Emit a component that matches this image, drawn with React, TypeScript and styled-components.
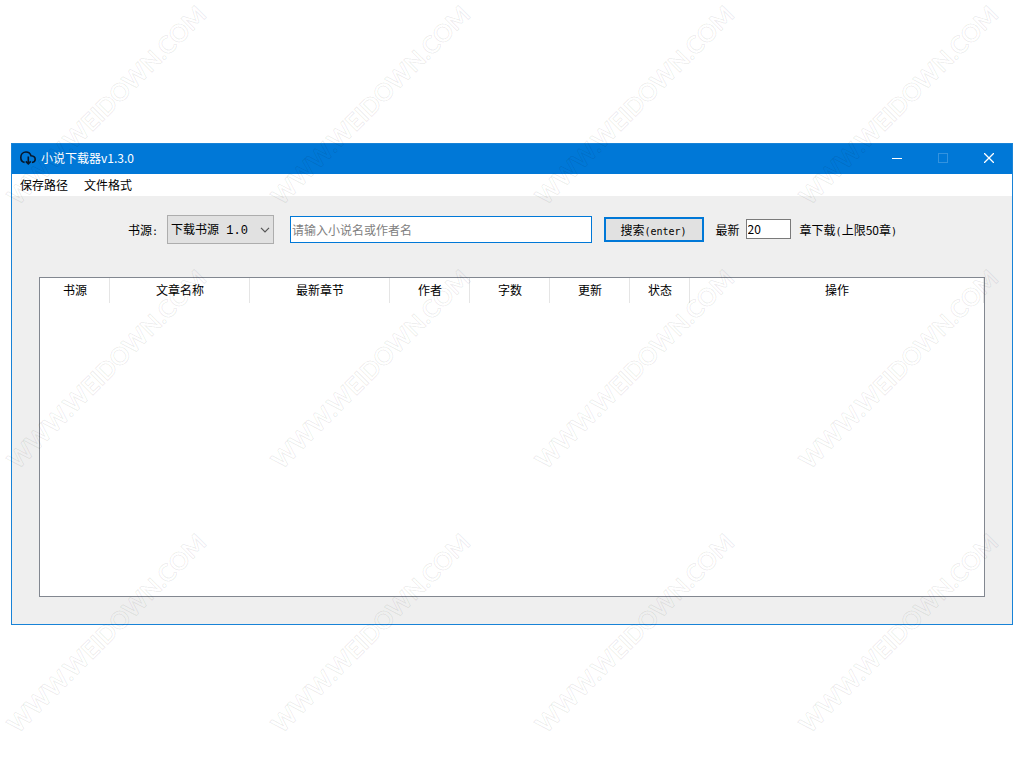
import React from "react";
import styled, { createGlobalStyle } from "styled-components";

const GlobalStyle = createGlobalStyle`
  * { box-sizing: border-box; }
  body {
    margin: 0;
    background: #fff;
    color: #000;
    font: 12px/16px "Noto Sans CJK SC", sans-serif;
  }
  button, input, select { font: inherit; color: inherit; margin: 0; border-radius: 0; outline: 0; }
`;

const Desktop = styled.main`
  position: relative;
  min-height: 100vh;
  padding: 143px 11px;
  overflow: hidden;
`;

const Window = styled.section`
  border: 1px solid #1883d7;
  background: #efefef;
`;

const TitleBar = styled.header`
  display: flex;
  align-items: center;
  height: 30px;
  padding: 0 0 2px 8px;
  background: #0078d7;
  color: #fff;
`;

const AppIcon = styled.svg`
  width: 16px;
  height: 16px;
  margin-right: 5px;
`;

const Title = styled.h1`
  flex: 1;
  margin: 0;
  font-size: 12px;
  font-weight: 400;
`;

const CaptionButton = styled.button`
  display: grid;
  place-items: center;
  width: 46px;
  height: 28px;
  padding: 0;
  border: 0;
  background: none;
  color: #fff;

  &:disabled { color: #3393df; }
`;

const MenuBar = styled.nav`
  display: flex;
  height: 22px;
  background: #fff;
`;

const MenuItem = styled.button`
  padding: 0 8px;
  border: 0;
  background: none;
`;

const Body = styled.div`
  padding: 19px 27px 27px;
`;

const SearchForm = styled.form`
  display: flex;
  align-items: center;
  height: 29px;
  margin-bottom: 33px;
  padding: 0 88px 0 89px;
`;

const Latin = styled.span`
  font: 10px/12px "DejaVu Sans Mono", monospace;
`;

const SourceLabel = styled.label`
  margin-right: 9px;
`;

const SelectWrap = styled.div`
  position: relative;
  width: 107px;
  margin-right: 16px;
`;

const SourceSelect = styled.select`
  display: block;
  width: 100%;
  height: 29px;
  padding: 2px 0 0 3px;
  appearance: none;
  border: 1px solid #adadad;
  background: #e1e1e1;
  font-family: "Liberation Mono", "Noto Sans CJK SC", monospace;
`;

const Chevron = styled.svg`
  position: absolute;
  top: 12px;
  right: 4px;
  width: 10px;
  height: 6px;
  pointer-events: none;
`;

const SearchInput = styled.input`
  flex: 1;
  min-width: 0;
  height: 27px;
  margin-right: 12px;
  padding: 0 1px;
  border: 1px solid #0078d7;
  background: #fff;

  &::placeholder { color: #808080; opacity: 1; }
`;

const SearchButton = styled.button`
  width: 100px;
  height: 25px;
  margin-right: 12px;
  padding: 0;
  border: 2px solid #0078d7;
  background: #e1e1e1;
`;

const CountInput = styled.input`
  width: 45px;
  height: 20px;
  margin: 0 9px 2px 6px;
  padding: 0 1px;
  border: 1px solid #7a7a7a;
  background: #fff;
`;

const TableFrame = styled.div`
  min-height: 320px;
  border: 1px solid #828790;
  background: #fff;
`;

const ResultTable = styled.table`
  width: 100%;
  table-layout: fixed;
  border-collapse: collapse;
`;

const HeadCell = styled.th<{ $width?: number }>`
  width: ${({ $width }) => ($width ? `${$width}px` : "auto")};
  height: 25px;
  padding: 0 0 2px;
  font-weight: 400;
  box-shadow: inset -1px 0 #e5e5e5;
`;

const WatermarkLayer = styled.div`
  position: absolute;
  inset: 0;
  overflow: hidden;
  display: grid;
  grid-template-columns: repeat(4, 264px);
  grid-auto-rows: 264px;
  pointer-events: none;
  user-select: none;
`;

const WatermarkTile = styled.div`
  display: grid;
  place-content: center;
  width: 212px;
  height: 210px;
`;

const WatermarkText = styled.span`
  transform: rotate(-45deg);
  white-space: nowrap;
  font: 700 24px/32px Lato, sans-serif;
  color: transparent;
  -webkit-text-stroke: 1px rgba(0, 0, 0, 0.08);
`;

const columns: { label: string; width?: number }[] = [
  { label: "书源", width: 70 },
  { label: "文章名称", width: 140 },
  { label: "最新章节", width: 140 },
  { label: "作者", width: 80 },
  { label: "字数", width: 80 },
  { label: "更新", width: 80 },
  { label: "状态", width: 60 },
  { label: "操作" },
];

export default function App() {
  return (
    <Desktop>
      <GlobalStyle />
      <Window>
        <TitleBar>
          <AppIcon viewBox="0 0 16 16" fill="none" stroke="#06172b" strokeWidth="1.6" aria-hidden="true">
            <path d="M4.6 12.4C2.1 11.9.8 9.9.8 7.4.8 4.3 3 2 6 2c2.5 0 4.3 1.4 5 3.7 2.5.2 4.2 1.5 4.2 3.6 0 1.8-1.2 3-3.2 3.2" />
            <path d="M8.3 6.4v7.4M5.8 11.4l2.5 2.5 2.5-2.5" />
          </AppIcon>
          <Title>小说下载器v1.3.0</Title>
          <CaptionButton aria-label="最小化">
            <svg width="10" height="10" shapeRendering="crispEdges"><path d="M0 5.5h10" stroke="currentColor" /></svg>
          </CaptionButton>
          <CaptionButton aria-label="最大化" disabled>
            <svg width="10" height="10" shapeRendering="crispEdges"><rect x=".5" y=".5" width="9" height="9" fill="none" stroke="currentColor" /></svg>
          </CaptionButton>
          <CaptionButton aria-label="关闭">
            <svg width="10" height="10"><path d="M0 0l10 10M10 0L0 10" stroke="currentColor" strokeWidth="1.3" /></svg>
          </CaptionButton>
        </TitleBar>
        <MenuBar>
          <MenuItem>保存路径</MenuItem>
          <MenuItem>文件格式</MenuItem>
        </MenuBar>
        <Body>
          <SearchForm onSubmit={(e) => e.preventDefault()}>
            <SourceLabel htmlFor="source">书源<Latin>:</Latin></SourceLabel>
            <SelectWrap>
              <SourceSelect id="source">
                <option>下载书源 1.0</option>
              </SourceSelect>
              <Chevron viewBox="0 0 10 6" fill="none" stroke="#555" strokeWidth="1.2" aria-hidden="true">
                <path d="M1 .8l4 4 4-4" />
              </Chevron>
            </SelectWrap>
            <SearchInput aria-label="小说名或作者名" placeholder="请输入小说名或作者名" />
            <SearchButton type="submit">搜索<Latin>(enter)</Latin></SearchButton>
            <label htmlFor="count">最新</label>
            <CountInput id="count" defaultValue="20" />
            <label htmlFor="count">章下载<Latin>(</Latin>上限50章<Latin>)</Latin></label>
          </SearchForm>
          <TableFrame>
            <ResultTable>
              <thead>
                <tr>
                  {columns.map((c) => (
                    <HeadCell key={c.label} $width={c.width} scope="col">{c.label}</HeadCell>
                  ))}
                </tr>
              </thead>
            </ResultTable>
          </TableFrame>
        </Body>
      </Window>
      <WatermarkLayer aria-hidden="true">
        {Array.from({ length: 12 }, (_, i) => (
          <WatermarkTile key={i}>
            <WatermarkText>WWW.WEIDOWN.COM</WatermarkText>
          </WatermarkTile>
        ))}
      </WatermarkLayer>
    </Desktop>
  );
}
